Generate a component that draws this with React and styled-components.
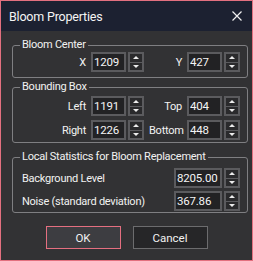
import React from "react";
import styled, { createGlobalStyle } from "styled-components";

const GlobalStyle = createGlobalStyle`
  * {
    box-sizing: border-box;
    margin: 0;
    padding: 0;
  }
  body {
    background: #323234;
    font-family: Roboto, "Liberation Sans", Arial, sans-serif;
  }
`;

// Dialog window
const Window = styled.div`
  width: 253px;
  height: 261px;
  border: 1px solid #e3707f;
  background: #323234;
  display: flex;
  flex-direction: column;
  color: #f2f2f2;
  font-size: 11px;
  letter-spacing: -0.25px;
`;

const TitleBar = styled.div`
  height: 30px;
  background: #1c2131;
  display: flex;
  align-items: center;
  justify-content: space-between;
  padding: 0 10px 0 8px;
`;

const Title = styled.span`
  font-size: 12.5px;
  letter-spacing: -0.2px;
  color: #f4f4f4;
`;

const CloseButton = styled.button`
  width: 10px;
  height: 10px;
  border: none;
  background: none;
  display: flex;
  cursor: pointer;
`;

const Body = styled.div`
  flex: 1;
  display: flex;
  flex-direction: column;
  padding: 7px 4px 0 11px;
`;

// Group boxes
const Group = styled.fieldset`
  border: 1px solid #7f7f82;
  border-radius: 3px;
  margin-top: ${(p) => p.$top || 0}px;
  padding: ${(p) => p.$padTop || 0}px 7px ${(p) => p.$padBottom || 0}px 0;
  min-width: 0;
  display: flex;
  flex-direction: column;
  gap: ${(p) => p.$gap || 4}px;
`;

const Legend = styled.legend`
  margin-left: 7px;
  padding: 0 2px;
  line-height: 14px;
  font-size: 11px;
  color: #f2f2f2;
`;

const PairRow = styled.div`
  display: grid;
  grid-template-columns: 73px 53px 33px 53px;
  column-gap: 5px;
  align-items: center;
  height: 20px;
`;

const StatRow = styled.div`
  display: grid;
  grid-template-columns: 1fr 66px;
  align-items: center;
  height: 20px;
  padding-left: 9px;
`;

const Label = styled.label`
  text-align: ${(p) => (p.$left ? "left" : "right")};
  white-space: nowrap;
  color: #f2f2f2;
`;

// Spin box
const SpinWrap = styled.div`
  display: flex;
  gap: 2px;
  height: 20px;
`;

const NumberField = styled.input`
  width: ${(p) => p.$width}px;
  height: 20px;
  border: 2px solid #5b5b5e;
  background: #222224;
  color: #f4f4f4;
  font-family: inherit;
  font-size: 11.5px;
  letter-spacing: -0.2px;
  padding: 0 1px;
  outline: none;
`;

const Spinner = styled.div`
  width: 16px;
  height: 20px;
  border: 2px solid #5b5b5e;
  display: flex;
  flex-direction: column;
  background: #2a2a2c;
`;

const SpinHalf = styled.button`
  flex: 1;
  border: none;
  border-top: ${(p) => (p.$down ? "1px solid #5b5b5e" : "none")};
  background: transparent;
  display: flex;
  align-items: center;
  justify-content: center;
  cursor: pointer;
`;

const Arrow = ({ down }) => (
  <svg width="6" height="3" viewBox="0 0 6 3">
    <polygon
      points={down ? "0,0 6,0 3,3" : "0,3 6,3 3,0"}
      fill="#ececec"
    />
  </svg>
);

const SpinBox = ({ value, width = 35 }) => (
  <SpinWrap>
    <NumberField $width={width} defaultValue={value} />
    <Spinner>
      <SpinHalf>
        <Arrow />
      </SpinHalf>
      <SpinHalf $down>
        <Arrow down />
      </SpinHalf>
    </Spinner>
  </SpinWrap>
);

// Buttons
const ButtonRow = styled.div`
  display: flex;
  justify-content: center;
  gap: 12px;
  margin-top: 13px;
  padding-right: 7px;
`;

const Button = styled.button`
  width: 75px;
  height: 23px;
  border: 1px solid ${(p) => (p.$primary ? "#e56f80" : "#6c6c6e")};
  background: ${(p) => (p.$primary ? "#3d3d41" : "#262628")};
  color: #f2f2f2;
  font-family: inherit;
  font-size: 11.5px;
  cursor: pointer;
`;

export default function App() {
  return (
    <>
      <GlobalStyle />
      <Window>
        <TitleBar>
          <Title>Bloom Properties</Title>
          <CloseButton aria-label="Close">
            <svg width="10" height="10" viewBox="0 0 10 10">
              <path d="M0.5 0.5L9.5 9.5M9.5 0.5L0.5 9.5" stroke="#f0f0f0" strokeWidth="1.2" />
            </svg>
          </CloseButton>
        </TitleBar>
        <Body>
          <Group $padBottom={5}>
            <Legend>Bloom Center</Legend>
            <PairRow>
              <Label>X</Label>
              <SpinBox value="1209" />
              <Label>Y</Label>
              <SpinBox value="427" />
            </PairRow>
          </Group>
          <Group $top={2} $padTop={2} $padBottom={2}>
            <Legend>Bounding Box</Legend>
            <PairRow>
              <Label>Left</Label>
              <SpinBox value="1191" />
              <Label>Top</Label>
              <SpinBox value="404" />
            </PairRow>
            <PairRow>
              <Label>Right</Label>
              <SpinBox value="1226" />
              <Label>Bottom</Label>
              <SpinBox value="448" />
            </PairRow>
          </Group>
          <Group $top={7} $padTop={4} $padBottom={1} $gap={3}>
            <Legend>Local Statistics for Bloom Replacement</Legend>
            <StatRow>
              <Label $left>Background Level</Label>
              <SpinBox value="8205.00" width={48} />
            </StatRow>
            <StatRow>
              <Label $left>Noise (standard deviation)</Label>
              <SpinBox value="367.86" width={48} />
            </StatRow>
          </Group>
          <ButtonRow>
            <Button $primary>OK</Button>
            <Button>Cancel</Button>
          </ButtonRow>
        </Body>
      </Window>
    </>
  );
}
